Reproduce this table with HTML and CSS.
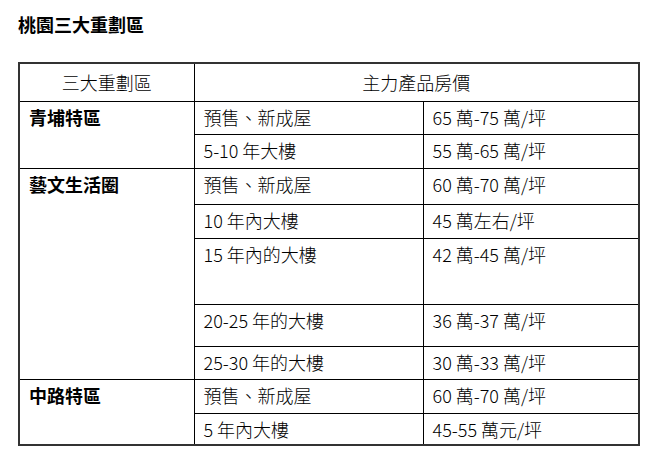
FILE: index.html
```html
<!DOCTYPE html>
<html lang="zh-Hant">
<head>
<meta charset="utf-8">
<title>桃園三大重劃區</title>
<link rel="stylesheet" href="styles.css">
</head>
<body>
<div class="page">
  <h1 class="title">桃園三大重劃區</h1>
  <table class="price-table">
    <colgroup>
      <col class="c1"><col class="c2"><col class="c3">
    </colgroup>
    <tr class="r-head">
      <th>三大重劃區</th>
      <th colspan="2">主力產品房價</th>
    </tr>
    <tr class="r33">
      <td class="area" rowspan="2">青埔特區</td>
      <td>預售、新成屋</td>
      <td>65 萬-75 萬/坪</td>
    </tr>
    <tr class="r34">
      <td>5-10 年大樓</td>
      <td>55 萬-65 萬/坪</td>
    </tr>
    <tr class="r36">
      <td class="area" rowspan="5">藝文生活圈</td>
      <td>預售、新成屋</td>
      <td>60 萬-70 萬/坪</td>
    </tr>
    <tr class="r34">
      <td>10 年內大樓</td>
      <td>45 萬左右/坪</td>
    </tr>
    <tr class="r66">
      <td>15 年內的大樓</td>
      <td>42 萬-45 萬/坪</td>
    </tr>
    <tr class="r42">
      <td>20-25 年的大樓</td>
      <td>36 萬-37 萬/坪</td>
    </tr>
    <tr class="r33">
      <td>25-30 年的大樓</td>
      <td>30 萬-33 萬/坪</td>
    </tr>
    <tr class="r34">
      <td class="area" rowspan="2">中路特區</td>
      <td>預售、新成屋</td>
      <td>60 萬-70 萬/坪</td>
    </tr>
    <tr class="r32">
      <td>5 年內大樓</td>
      <td>45-55 萬元/坪</td>
    </tr>
  </table>
</div>
</body>
</html>
```
FILE: styles.css
```css
html, body {
  margin: 0;
  padding: 0;
  background: #ffffff;
}
body {
  font-family: "Noto Sans CJK TC", "Noto Sans", sans-serif;
  color: #000;
}
.page {
  padding: 13px 0 0 18px;
}
.title {
  margin: 0;
  font-size: 18px;
  line-height: 22px;
  font-weight: bold;
}
.price-table {
  margin-top: 27px;
  border-collapse: collapse;
  border: 2px solid #333;
  font-size: 18px;
  line-height: 22px;
  table-layout: fixed;
  width: 620px;
}
.c1 { width: 175px; }
.c2 { width: 229px; }
.c3 { width: 216px; }
.price-table th,
.price-table td {
  border: 1px solid #000;
  padding: 4px 9px 0 9px;
  vertical-align: top;
  text-align: left;
  font-weight: 300;
  white-space: nowrap;
}
.price-table th {
  text-align: center;
  vertical-align: middle;
  padding: 0;
}
.price-table td.area {
  font-weight: bold;
}
.r-head { height: 38px; }
.r32 { height: 32px; }
.r33 { height: 33px; }
.r34 { height: 34px; }
.r36 { height: 36px; }
.r42 { height: 42px; }
.r66 { height: 66px; }
```
